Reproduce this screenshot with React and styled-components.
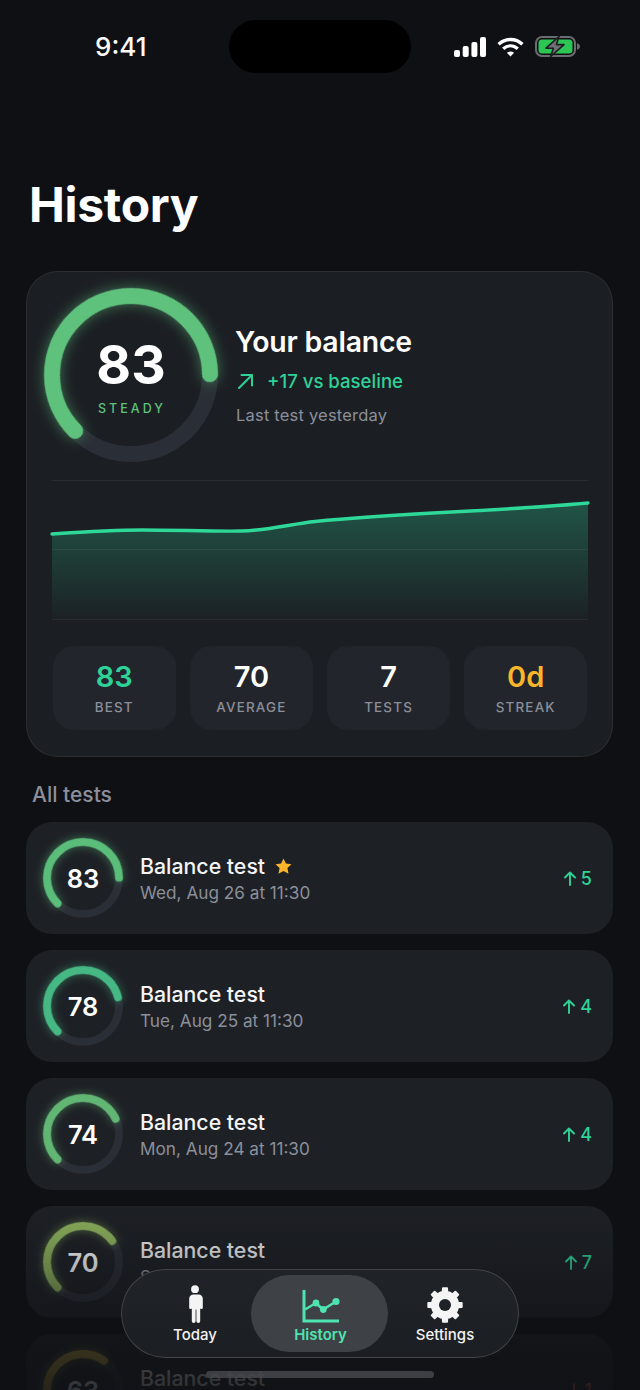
import React from "react"
import styled, { createGlobalStyle } from "styled-components"

const GlobalStyle = createGlobalStyle`
  html, body {
    margin: 0;
    padding: 0;
    background: #0e1014;
  }
  body {
    font-family: Inter, "Liberation Sans", sans-serif;
    -webkit-font-smoothing: antialiased;
  }
`

const Page = styled.div`
  position: relative;
  width: 640px;
  height: 1390px;
  overflow: hidden;
  background: #0e1014;
  color: #fff;
`

const StatusBar = styled.div`
  display: grid;
  grid-template-columns: 229px 182px 1fr;
  align-items: center;
  padding-top: 20px;
`

const Time = styled.div`
  padding: 1px 0 0 95px;
  font-size: 26px;
  font-weight: 500;
  line-height: 52px;
  color: #fafafa;
`

const Island = styled.div`
  height: 53px;
  border-radius: 27px;
  background: #000;
`

const StatusIcons = styled.div`
  display: flex;
  align-items: center;
  gap: 11px;
  padding-left: 43px;
  svg {
    display: block;
  }
`

const Title = styled.h1`
  margin: 104px 0 38px 29px;
  font-size: 48px;
  font-weight: 700;
  line-height: 56px;
  letter-spacing: -0.3px;
  color: #fff;
`

const SummaryCard = styled.section`
  box-sizing: border-box;
  width: 587px;
  height: 486px;
  margin-left: 26px;
  padding: 16px 17px 0;
  border: 1px solid rgba(255, 255, 255, 0.07);
  border-radius: 32px;
  background: #1b1e23;
`

const Hero = styled.div`
  display: flex;
  align-items: center;
  gap: 18px;
`

const RingBox = styled.div`
  display: grid;
  flex: none;
  width: ${(p) => p.$size}px;
  height: ${(p) => p.$size}px;
  & > * {
    grid-area: 1 / 1;
  }
  svg {
    display: block;
    overflow: visible;
  }
`

const RingCenter = styled.div`
  display: flex;
  flex-direction: column;
  align-items: center;
  justify-content: center;
`

const BigScore = styled.div`
  margin-top: 2px;
  font-size: 53.5px;
  font-weight: 700;
  line-height: 60px;
  color: #fff;
`

const Mood = styled.div`
  margin-top: 6px;
  padding-left: 2px;
  font-size: 12.5px;
  font-weight: 500;
  line-height: 16px;
  letter-spacing: 3px;
  color: #5ec27c;
`

const HeroText = styled.div`
  display: flex;
  flex-direction: column;
  margin-top: 2px;
`

const HeroTitle = styled.div`
  margin-left: -1px;
  font-size: 28.4px;
  font-weight: 600;
  line-height: 34px;
  letter-spacing: -0.2px;
  color: #fff;
`

const Trend = styled.div`
  display: flex;
  align-items: center;
  gap: 13px;
  margin-top: 9px;
  font-size: 18.6px;
  font-weight: 500;
  line-height: 26px;
  color: #2ed297;
`

const LastTest = styled.div`
  margin-top: 9px;
  font-size: 16.5px;
  line-height: 24px;
  letter-spacing: 0.2px;
  color: #8b8f9b;
`

const Chart = styled.svg`
  display: block;
  margin: 18px 8px 0;
  overflow: visible;
`

const Stats = styled.div`
  display: grid;
  grid-template-columns: repeat(4, 122.5px);
  justify-content: space-between;
  margin: 26px 8px 0 9px;
`

const Stat = styled.div`
  display: flex;
  flex-direction: column;
  align-items: center;
  justify-content: center;
  height: 84px;
  border-radius: 21px;
  background: #22262c;
`

const StatValue = styled.div`
  font-size: 29px;
  font-weight: 600;
  line-height: 34px;
  color: ${(p) => p.$color || "#fff"};
`

const StatLabel = styled.div`
  margin-top: 4px;
  font-size: 13.4px;
  font-weight: 500;
  line-height: 18px;
  letter-spacing: 1.2px;
  color: #8b8f9b;
`

const SectionTitle = styled.h2`
  margin: 25px 0 14px 32px;
  font-size: 21px;
  font-weight: 500;
  line-height: 26px;
  color: #8b8f9b;
`

const TestList = styled.div`
  display: flex;
  flex-direction: column;
  gap: 16px;
  width: 587px;
  margin-left: 26px;
`

const TestRow = styled.div`
  display: flex;
  flex: none;
  align-items: center;
  gap: 17px;
  box-sizing: border-box;
  height: 112px;
  padding: 0 21px 0 17px;
  border-radius: 26px;
  background: #1d2025;
`

const RowScore = styled.div`
  font-size: 25.5px;
  font-weight: 600;
  color: #fff;
`

const RowText = styled.div`
  flex: 1;
  min-width: 0;
  padding-top: 1px;
`

const RowTitle = styled.div`
  display: flex;
  align-items: center;
  gap: 10px;
  font-size: 21.3px;
  font-weight: 500;
  line-height: 28px;
  color: #f4f4f5;
`

const RowDate = styled.div`
  font-size: 17.2px;
  line-height: 26px;
  color: #8b8f9b;
`

const Delta = styled.div`
  display: flex;
  align-items: center;
  gap: 5px;
  font-size: 18px;
  font-weight: 500;
  color: ${(p) => (p.$down ? "#e05a5a" : "#2ed297")};
`

const BottomFade = styled.div`
  position: absolute;
  left: 0;
  right: 0;
  bottom: 0;
  height: 190px;
  pointer-events: none;
  background: linear-gradient(
    to bottom,
    rgba(14, 16, 20, 0) 0%,
    rgba(14, 16, 20, 0.3) 35%,
    rgba(14, 16, 20, 0.78) 80%,
    rgba(14, 16, 20, 0.86) 100%
  );
`

const TabBar = styled.nav`
  position: absolute;
  left: 121px;
  top: 1269px;
  display: grid;
  grid-template-columns: 112px 137px 112px;
  box-sizing: border-box;
  width: 398px;
  height: 89px;
  padding: 5px 18px 5px 17px;
  border: 1px solid rgba(255, 255, 255, 0.16);
  border-radius: 45px;
  background: linear-gradient(to bottom, #202327, #1b1e22);
`

const Tab = styled.div`
  display: flex;
  flex-direction: column;
  align-items: center;
  justify-content: flex-end;
  padding-bottom: 7px;
  border-radius: 39px;
  background: ${(p) => (p.$active ? "#3e4146" : "transparent")};
  font-size: 15px;
  font-weight: ${(p) => (p.$active ? 600 : 500)};
  line-height: 20px;
  color: ${(p) => (p.$active ? "#4fe3b0" : "#f2f2f3")};
  & + & {
    padding-left: 2px;
  }
  svg {
    display: block;
    margin-bottom: 2px;
  }
`

const HomeIndicator = styled.div`
  position: absolute;
  left: 206px;
  top: 1371px;
  width: 228px;
  height: 7px;
  border-radius: 4px;
  background: rgba(70, 72, 76, 0.85);
`

// the arc starts at bottom left and a full 100 would sweep 270deg
const Ring = ({ size, stroke, value, color, glow, children }) => {
  const r = (size - stroke) / 2
  const c = 2 * Math.PI * r
  const arc = (value * 2.7 * c) / 360
  return (
    <RingBox $size={size}>
      <svg width={size} height={size}>
        <circle cx={size / 2} cy={size / 2} r={r} fill="none" stroke="#2a2e36" strokeWidth={stroke} />
        <circle
          cx={size / 2}
          cy={size / 2}
          r={r}
          fill="none"
          stroke={color}
          strokeWidth={stroke}
          strokeLinecap="round"
          strokeDasharray={`${arc} ${c}`}
          transform={`rotate(135 ${size / 2} ${size / 2})`}
          style={{ filter: `drop-shadow(0 0 ${glow}px ${color}88)` }}
        />
      </svg>
      <RingCenter>{children}</RingCenter>
    </RingBox>
  )
}

const SignalIcon = () => (
  <svg width="32" height="20" viewBox="0 0 32 20" fill="#fff">
    <rect x="0" y="13" width="6" height="7" rx="2" />
    <rect x="8.7" y="9" width="6" height="11" rx="2" />
    <rect x="17.4" y="5" width="6" height="15" rx="2" />
    <rect x="26" y="0" width="6" height="20" rx="2" />
  </svg>
)

const WifiIcon = () => (
  <svg width="27" height="20" viewBox="0 0 27 20" fill="none" stroke="#fff" strokeWidth="3.4">
    <path d="M1.6 7.2C8.4 .9 18.6 .9 25.4 7.2" />
    <path d="M6.2 11.8C10.6 7.9 16.4 7.9 20.8 11.8" />
    <path d="M13.5 19.6L9.9 15.8C12 14.1 15 14.1 17.1 15.8Z" fill="#fff" stroke="none" />
  </svg>
)

const BatteryIcon = () => (
  <svg width="45" height="21" viewBox="0 0 45 21">
    <rect x="1" y="1" width="39" height="19" rx="6" fill="none" stroke="#6a6c70" strokeWidth="2" />
    <rect x="3.5" y="3.5" width="34" height="14" rx="3.5" fill="#2cc654" />
    <path d="M42 7.2c1.8.5 3 1.7 3 3.3s-1.2 2.8-3 3.3z" fill="#6a6c70" />
    <path
      d="M24 .5L11 12.2h7.4L15.6 20.5 29 8.6h-7.6z"
      fill="#6e7074"
      stroke="#1b1d20"
      strokeWidth="1.6"
      strokeLinejoin="round"
    />
  </svg>
)

const TrendArrow = () => (
  <svg width="18" height="18" viewBox="0 0 18 18" fill="none" stroke="currentColor" strokeWidth="2" strokeLinecap="round" strokeLinejoin="round">
    <path d="M3 16L16 3M5.5 3H16V13.5" />
  </svg>
)

const DeltaArrow = ({ down }) => (
  <svg
    width="12"
    height="15"
    viewBox="0 0 12 15"
    fill="none"
    stroke="currentColor"
    strokeWidth="1.9"
    strokeLinecap="round"
    strokeLinejoin="round"
    transform={down ? "rotate(180)" : undefined}
  >
    <path d="M6 14V1.5M1 6.5L6 1.5L11 6.5" />
  </svg>
)

const PersonIcon = () => (
  <svg width="16" height="38" viewBox="0 0 16 38" fill="#f4f4f5">
    <circle cx="8" cy="4.2" r="3.9" />
    <path d="M4.4 9.6h7.2c2.4 0 4.2 1.8 4.2 4.2v8.6c0 .9-.7 1.6-1.5 1.6-.5 0-.8-.2-1.1-.4V36c0 1.1-.8 2-1.9 2s-1.9-.9-1.9-2V24.4h-.8V36c0 1.1-.8 2-1.9 2s-1.9-.9-1.9-2V23.6c-.3.3-.7.4-1.1.4-.8 0-1.5-.7-1.5-1.6v-8.6c0-2.4 1.8-4.2 4.2-4.2z" />
  </svg>
)

const HistoryIcon = () => (
  <svg width="38" height="33" viewBox="0 0 38 33" fill="none" stroke="#4fe3b0">
    <path d="M2 0V31H37" strokeWidth="3" />
    <path d="M3 19.5L14 13L21 19.5L34 11.5" strokeWidth="2.6" />
    <circle cx="14" cy="13" r="3.4" fill="#4fe3b0" stroke="none" />
    <circle cx="21.3" cy="19.5" r="3.4" fill="#4fe3b0" stroke="none" />
    <circle cx="34" cy="11.5" r="3.6" fill="#4fe3b0" stroke="none" />
  </svg>
)

const gearPath = () => {
  const teeth = 8
  const pts = []
  for (let i = 0; i < teeth; i++) {
    const a = (i * 360) / teeth - 90
    const offs = [
      [-22.5, 13.2],
      [-9.5, 13.2],
      [-7, 16.8],
      [7, 16.8],
      [9.5, 13.2],
    ]
    offs.forEach(([d, r]) => {
      const t = ((a + d) * Math.PI) / 180
      pts.push(`${(18 + r * Math.cos(t)).toFixed(2)} ${(18 + r * Math.sin(t)).toFixed(2)}`)
    })
  }
  return `M${pts.join("L")}Z`
}

const GearIcon = () => (
  <svg width="36" height="36" viewBox="0 0 36 36">
    <path d={gearPath()} fill="#f4f4f5" stroke="#f4f4f5" strokeWidth="2" strokeLinejoin="round" />
    <circle cx="18" cy="18" r="6" fill="#1e2125" />
  </svg>
)

const StarIcon = () => (
  <svg width="17" height="16" viewBox="0 0 24 23" fill="#fbb52b">
    <path d="M12 .6l3.5 7.4 8 1-5.9 5.5 1.6 8L12 18.6l-7.2 3.9 1.6-8L.5 9l8-1z" />
  </svg>
)

const tests = [
  { score: 83, color: "#5abd79", date: "Wed, Aug 26 at 11:30", delta: 5, star: true },
  { score: 78, color: "#46b884", date: "Tue, Aug 25 at 11:30", delta: 4 },
  { score: 74, color: "#62b673", date: "Mon, Aug 24 at 11:30", delta: 4 },
  { score: 70, color: "#8fb45d", date: "Sun, Aug 23 at 11:30", delta: 7 },
  { score: 63, color: "#c2a63c", date: "Sat, Aug 22 at 11:30", delta: -1 },
]

const stats = [
  { value: "83", label: "BEST", color: "#2ed297" },
  { value: "70", label: "AVERAGE" },
  { value: "7", label: "TESTS" },
  { value: "0d", label: "STREAK", color: "#fbb52b" },
]

const linePath = "M0 54C30 52 60 50 90 50C125 50 160 51.5 190 51C215 50.5 240 44 263 41.5C350 33 450 31 536 23"

export default function App() {
  return (
    <Page>
      <GlobalStyle />
      <StatusBar>
        <Time>9:41</Time>
        <Island />
        <StatusIcons>
          <SignalIcon />
          <WifiIcon />
          <BatteryIcon />
        </StatusIcons>
      </StatusBar>

      <Title>History</Title>

      <SummaryCard>
        <Hero>
          <Ring size={174} stroke={16} value={83} color="#5ec27c" glow={7}>
            <BigScore>83</BigScore>
            <Mood>STEADY</Mood>
          </Ring>
          <HeroText>
            <HeroTitle>Your balance</HeroTitle>
            <Trend>
              <TrendArrow />
              +17 vs baseline
            </Trend>
            <LastTest>Last test yesterday</LastTest>
          </HeroText>
        </Hero>

        <Chart width="536" height="140" viewBox="0 0 536 140">
          <defs>
            <linearGradient id="area" x1="0" y1="0" x2="0" y2="1">
              <stop offset="0%" stopColor="#2ed297" stopOpacity="0.3" />
              <stop offset="100%" stopColor="#2ed297" stopOpacity="0.02" />
            </linearGradient>
          </defs>
          <path d={`${linePath}V139H0Z`} fill="url(#area)" />
          <path d="M0 0.5H536M0 69.5H536M0 139.5H536" stroke="rgba(255,255,255,0.06)" />
          <path d={linePath} fill="none" stroke="#2ed898" strokeWidth="3.4" strokeLinecap="round" />
        </Chart>

        <Stats>
          {stats.map((s) => (
            <Stat key={s.label}>
              <StatValue $color={s.color}>{s.value}</StatValue>
              <StatLabel>{s.label}</StatLabel>
            </Stat>
          ))}
        </Stats>
      </SummaryCard>

      <SectionTitle>All tests</SectionTitle>

      <TestList>
        {tests.map((t) => (
          <TestRow key={t.date}>
            <Ring size={80} stroke={8} value={t.score} color={t.color} glow={5}>
              <RowScore>{t.score}</RowScore>
            </Ring>
            <RowText>
              <RowTitle>
                Balance test
                {t.star && <StarIcon />}
              </RowTitle>
              <RowDate>{t.date}</RowDate>
            </RowText>
            <Delta $down={t.delta < 0}>
              <DeltaArrow down={t.delta < 0} />
              {Math.abs(t.delta)}
            </Delta>
          </TestRow>
        ))}
      </TestList>

      <BottomFade />

      <TabBar>
        <Tab>
          <PersonIcon />
          Today
        </Tab>
        <Tab $active>
          <HistoryIcon />
          History
        </Tab>
        <Tab>
          <GearIcon />
          Settings
        </Tab>
      </TabBar>
      <HomeIndicator />
    </Page>
  )
}
